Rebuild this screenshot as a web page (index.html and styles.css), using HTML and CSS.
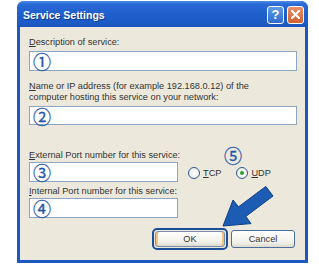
FILE: index.html
```html
<!DOCTYPE html>
<html lang="en">
<head>
    <meta charset="UTF-8">
    <meta name="viewport" content="width=device-width, initial-scale=1.0">
    <title>Service Settings</title>
    <link rel="stylesheet" href="styles.css">
</head>
<body>
    <div class="window">
        <div class="titlebar">
            <div class="title">Service Settings</div>
            <div class="controls">
                <span class="ctrl help">?</span>
                <span class="ctrl close">
                    <svg width="9" height="9" viewBox="0 0 9 9"><path d="M1 1L8 8M8 1L1 8" stroke="#fff" stroke-width="2" stroke-linecap="square"/></svg>
                </span>
            </div>
        </div>

        <div class="content">
            <div class="label"><u>D</u>escription of service:</div>
            <div class="field"><span class="num">①</span></div>

            <div class="label two-line"><u>N</u>ame or IP address (for example 192.168.0.12) of the<br>computer hosting this service on your network:</div>
            <div class="field short-h"><span class="num">②</span></div>

            <div class="ports">
                <div class="port-fields">
                    <div class="label"><u>E</u>xternal Port number for this service:</div>
                    <div class="field"><span class="num">③</span></div>
                    <div class="label gap"><u>I</u>nternal Port number for this service:</div>
                    <div class="field"><span class="num">④</span></div>
                </div>
                <div class="protocol">
                    <div class="num five">⑤</div>
                    <div class="radios">
                        <span class="radio"></span><span class="radio-label"><u>T</u>CP</span>
                        <span class="radio checked"></span><span class="radio-label"><u>U</u>DP</span>
                    </div>
                </div>
            </div>

            <div class="buttons">
                <div class="focus"><button class="button ok">OK</button></div>
                <button class="button">Cancel</button>
            </div>
        </div>
    </div>

    <svg class="arrow" width="319" height="264" viewBox="0 0 319 264">
        <polygon points="223,226 233,200 238.6,206.8 265.8,186.4 273,196 245.8,216.4 251,223.6" fill="#1d5cb3" stroke="#0e3f86" stroke-width="1" stroke-linejoin="round"/>
    </svg>
</body>
</html>
```

FILE: styles.css
```css
* {
    margin: 0;
    padding: 0;
    box-sizing: border-box;
}

body {
    background-color: #fff;
    font-family: "Liberation Sans", Arial, sans-serif;
    font-size: 9.2px;
    color: #333;
}

.window {
    margin: 1px 0 0 17px;
    width: 291px;
    height: 262px;
    background: #1c57c2;
    border-radius: 7px 7px 0 0;
    display: flex;
    flex-direction: column;
}

.titlebar {
    height: 26px;
    display: flex;
    justify-content: space-between;
    align-items: center;
    padding: 0 4px 0 6px;
    border-radius: 7px 7px 0 0;
    background: linear-gradient(#4d8ee8 0, #2a6ad6 3px, #2060cc 12px, #1c5ac6 22px, #1b55bd 26px);
}

.title {
    color: #fff;
    font-weight: bold;
    font-size: 10.5px;
    text-shadow: 1px 1px 0 #0f3a8a;
    margin-top: 2px;
}

.controls {
    display: flex;
    gap: 3px;
    margin-top: 1px;
}

.ctrl {
    width: 17px;
    height: 18px;
    border: 1px solid #fff;
    border-radius: 3px;
    display: flex;
    align-items: center;
    justify-content: center;
    color: #fff;
    font-weight: bold;
    font-size: 13px;
}

.help {
    background: linear-gradient(#5f9ae6, #2d6bd0);
}

.close {
    background: linear-gradient(#e8906a, #d0602f);
}

.content {
    flex: 1;
    margin: 0 3px 3px;
    background-color: #ece9dc;
    padding: 9px 8px 0 9px;
}

.label {
    line-height: 12px;
    height: 12px;
    white-space: nowrap;
}

.label.two-line {
    margin-top: 10px;
    line-height: 11px;
    height: 22px;
}

.label.gap {
    margin-top: 3px;
}

.field {
    height: 20px;
    margin-top: 3px;
    background-color: #fff;
    border: 1px solid #8ba6c4;
    padding-left: 3px;
    display: flex;
    align-items: center;
}

.field.short-h {
    height: 19px;
}

.num {
    font-family: "Noto Sans CJK JP", sans-serif;
    font-size: 18px;
    line-height: 16px;
    color: #1f56aa;
    -webkit-text-stroke: 0.3px #1f56aa;
}

.ports {
    display: flex;
    margin-top: 24px;
}

.port-fields {
    width: 149px;
}

.port-fields .field {
    margin-top: 1px;
}

.protocol {
    margin-left: 10px;
    margin-top: -2px;
}

.num.five {
    margin-left: 36px;
}

.radios {
    display: flex;
    align-items: center;
    margin-top: 4px;
    height: 12px;
}

.radio {
    width: 12px;
    height: 12px;
    border: 1px solid #2c5890;
    border-radius: 50%;
    background: radial-gradient(circle at 60% 60%, #fff 0, #e6e6e0 100%);
    display: flex;
    align-items: center;
    justify-content: center;
}

.radio.checked {
    margin-left: 15px;
}

.radio.checked::after {
    content: "";
    width: 4px;
    height: 4px;
    border-radius: 50%;
    background: #2aa22a;
}

.radio-label {
    margin-left: 3px;
}

.buttons {
    display: flex;
    justify-content: flex-end;
    align-items: center;
    gap: 3px;
    margin-top: 10px;
    padding-right: 2px;
    height: 22px;
}

.focus {
    border: 2px solid #1d4f99;
    border-radius: 5px;
    padding: 1px;
}

.button {
    font-family: "Liberation Sans", Arial, sans-serif;
    font-size: 9.2px;
    color: #333;
    height: 18px;
    width: 64px;
    border: 1px solid #4a6f9e;
    border-radius: 3px;
    background: linear-gradient(#fff, #f2f1ea 70%, #dcdad0);
}

.button.ok {
    width: 70px;
    height: 16px;
    border-color: #7a8fae;
    box-shadow: inset 2px 0 0 #f6c27d, inset -2px 0 0 #f6c27d;
}

.arrow {
    position: absolute;
    left: 0;
    top: 0;
    pointer-events: none;
}
```
